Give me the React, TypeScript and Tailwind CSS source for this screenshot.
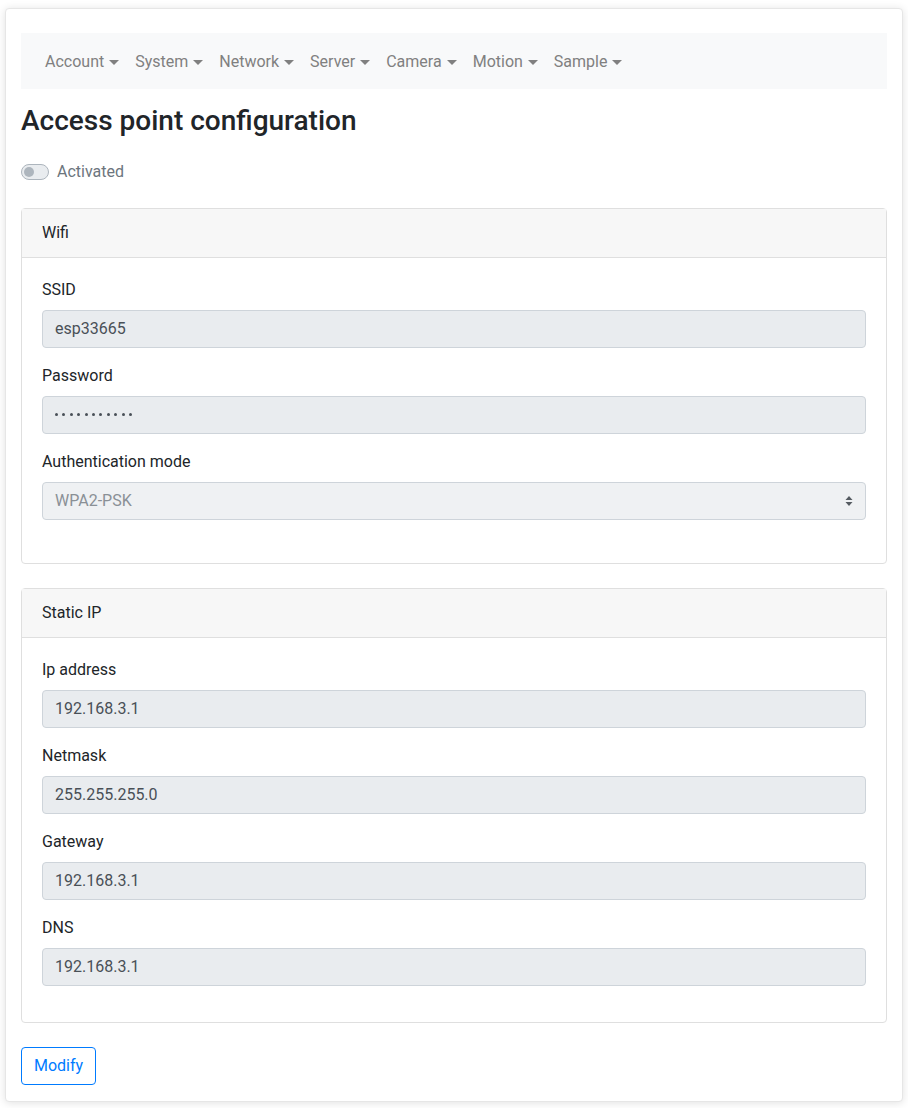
import React from 'react';

const menus = ['Account', 'System', 'Network', 'Server', 'Camera', 'Motion', 'Sample'];

const wifiFields = [
  { label: 'SSID', value: 'esp33665' },
  { label: 'Password', value: '•••••••••••', password: true },
];

const ipFields = [
  { label: 'Ip address', value: '192.168.3.1' },
  { label: 'Netmask', value: '255.255.255.0' },
  { label: 'Gateway', value: '192.168.3.1' },
  { label: 'DNS', value: '192.168.3.1' },
];

function Caret() {
  return <span className="ml-[5px] inline-block h-0 w-0 border-x-[5px] border-t-[5px] border-x-transparent border-t-[#808080] align-middle" />;
}

function Field({ label, value, password }: { label: string; value: string; password?: boolean }) {
  return (
    <div className="mb-4">
      <div className="mb-2 leading-6 text-[#212529]">{label}</div>
      <div className="flex h-[38px] items-center rounded border border-[#ced4da] bg-[#e9ecef] px-3 text-[#495057]">
        {password ? (
          <span className="flex items-center gap-[4.4px]" aria-label={value}>
            {Array.from({ length: value.length }).map((_, i) => (
              <span key={i} className="h-[3px] w-[3px] rounded-full bg-[#495057]" />
            ))}
          </span>
        ) : (
          value
        )}
      </div>
    </div>
  );
}

function Panel({ title, children, extra }: { title: string; children: React.ReactNode; extra?: string }) {
  return (
    <div className="mb-6 rounded border border-[#dfdfdf]">
      <div className="border-b border-[#dfdfdf] bg-[#f7f7f7] px-5 py-3 leading-6 text-[#212529]">{title}</div>
      <div className={`px-5 pt-5 ${extra ?? 'pb-5'}`}>{children}</div>
    </div>
  );
}

export default function App() {
  return (
    <div className="min-h-[1108px] bg-white px-[5px] pt-[8px] pb-[7px] font-['Roboto',sans-serif] text-[16px]">
      <div className="rounded border border-[#e6e6e6] bg-white px-[15px] pt-6 pb-4 shadow-[0_1px_8px_rgba(0,0,0,0.12)]">
        {/* Menu bar */}
        <nav className="flex h-[56px] items-center bg-[#f8f9fa] px-4 pt-[2px]">
          {menus.map((m) => (
            <span key={m} className="flex items-center px-2 text-[#808080]">
              {m}
              <Caret />
            </span>
          ))}
        </nav>

        <h3 className="mt-[15px] mb-[22px] text-[28px] font-medium leading-[1.2] text-[#212529]">Access point configuration</h3>

        <div className="mb-6 flex h-6 items-center gap-2">
          <span className="relative h-4 w-[28px] rounded-full border border-[#adb5bd] bg-[#e9ecef]">
            <span className="absolute top-[2px] left-[2px] h-[10px] w-[10px] rounded-full bg-[#adb5bd]" />
          </span>
          <span className="text-[#6c757d]">Activated</span>
        </div>

        <Panel title="Wifi" extra="pb-[43px]">
          {wifiFields.map((f) => (
            <Field key={f.label} {...f} />
          ))}
          <div>
            <div className="mb-2 leading-6 text-[#212529]">Authentication mode</div>
            <div className="flex h-[38px] items-center justify-between rounded border border-[#ced4da] bg-[#eff1f3] pr-3 pl-3 text-[#8a9096]">
              <span>WPA2-PSK</span>
              <svg width="8" height="12" viewBox="0 0 8 12">
                <path d="M4 1 L7.5 5 H0.5 Z M4 11 L0.5 7 H7.5 Z" fill="#555b61" />
              </svg>
            </div>
          </div>
        </Panel>

        <Panel title="Static IP">
          {ipFields.map((f) => (
            <Field key={f.label} {...f} />
          ))}
        </Panel>

        <button className="h-[38px] rounded border border-[#007bff] px-3 text-[#007bff]">Modify</button>
      </div>
    </div>
  );
}
